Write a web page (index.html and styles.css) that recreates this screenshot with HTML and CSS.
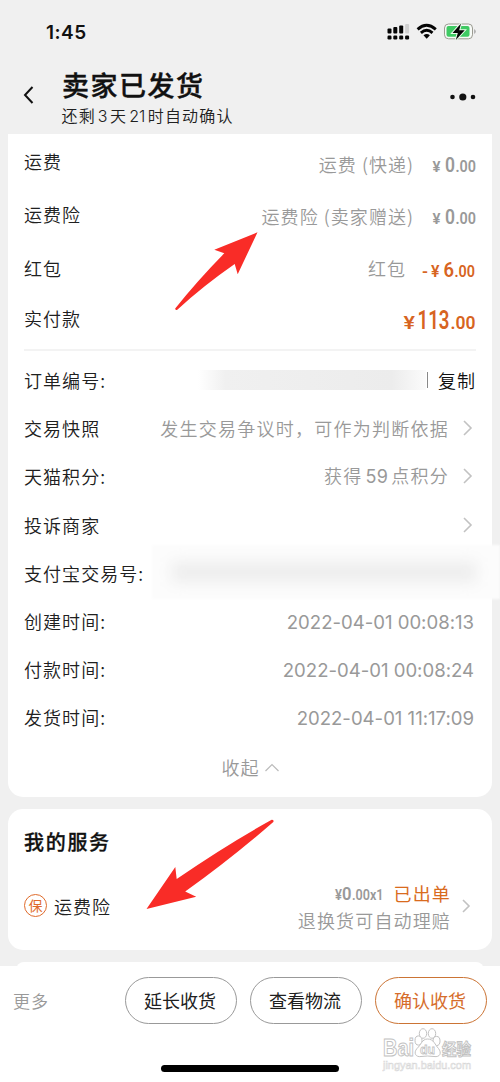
FILE: index.html
```html
<!DOCTYPE html>
<html lang="zh-CN">
<head>
<meta charset="utf-8">
<title>订单详情</title>
<link rel="stylesheet" href="styles.css">
</head>
<body>
<div class="screen">
  <div class="status">
    <span class="clock">1:45</span>
    <svg class="status-icons" width="92" height="20" viewBox="0 0 92 20">
      <g fill="#050505">
        <rect x="1.5" y="7.5" width="4" height="5" rx="1"/><rect x="7.3" y="6" width="4" height="6.500" rx="1"/><rect x="13.2" y="4.500" width="4" height="8" rx="1"/>
        <rect x="1.500" y="14.500" width="4" height="4" rx="1.200"/><rect x="7.300" y="14.500" width="4" height="4" rx="1.200"/><rect x="13.200" y="14.500" width="4" height="4" rx="1.200"/><rect x="19.100" y="14.500" width="4" height="4" rx="1.200"/>
      </g>
      <rect x="19.100" y="3" width="4" height="9.500" rx="1" fill="#d0d0d0"/>
      <path d="M31.600 8.300Q40.500 0.300 49.800 8.300M34.900 11.900Q40.700 6.800 46.500 11.900" fill="none" stroke="#050505" stroke-width="2.900"/>
      <path d="M37.500 14.300Q40.700 11.700 43.900 14.300L40.700 17.800Z" fill="#050505"/>
      <rect x="58.500" y="3" width="28" height="14.800" rx="4" fill="#f7faf7" stroke="#9b9b91"/>
      <rect x="60.500" y="5" width="23" height="10.800" rx="2" fill="#3fca63"/>
      <path d="M88.500 8v5q2-2.500 0-5" fill="#777"/>
      <path d="M75 2.500 66.500 12h5.300l-2 6.900 8.900-9.700h-5.500z" fill="#050505" stroke="#eafbea" stroke-width="2" paint-order="stroke"/>
    </svg>
  </div>
  <header class="head">
    <svg class="back" width="12" height="20" viewBox="0 0 12 20"><path d="M10.500 2 3 10l7.500 8" fill="none" stroke="#111" stroke-width="2"/></svg>
    <div class="titles"><h1>卖家已发货</h1><p>还剩<span class="num">3</span>天<span class="num">21</span>时自动确认</p></div>
    <svg class="dots" width="28" height="10" viewBox="0 0 28 10"><circle cx="3.500" cy="5" r="2.300"/><circle cx="13.800" cy="5" r="3.600"/><circle cx="24" cy="5" r="2.300"/></svg>
  </header>

  <main>
    <section class="card order">
      <div class="fees">
        <div class="row"><span>运费</span><span class="fee">运费 (快递)</span>
          <svg class="price grey" width="64" height="28" viewBox="0 0 64 28"><text x="16.500" y="22" font-size="15" textLength="8" lengthAdjust="spacingAndGlyphs">¥</text><text x="29" y="22" font-size="20" textLength="10" lengthAdjust="spacingAndGlyphs">0</text><text x="39.500" y="22" font-size="16" textLength="20.500" lengthAdjust="spacingAndGlyphs">.00</text></svg></div>
        <div class="row"><span>运费险</span><span class="fee">运费险 (卖家赠送)</span>
          <svg class="price grey" width="64" height="28" viewBox="0 0 64 28"><text x="16.500" y="22" font-size="15" textLength="8" lengthAdjust="spacingAndGlyphs">¥</text><text x="29" y="22" font-size="20" textLength="10" lengthAdjust="spacingAndGlyphs">0</text><text x="39.500" y="22" font-size="16" textLength="20.500" lengthAdjust="spacingAndGlyphs">.00</text></svg></div>
        <div class="row"><span>红包</span><span class="fee coupon">红包</span>
          <svg class="price orange" width="64" height="28" viewBox="0 0 64 28"><text x="6" y="22.500" font-size="16" textLength="6" lengthAdjust="spacingAndGlyphs">-</text><text x="15" y="23" font-size="16" textLength="8.500" lengthAdjust="spacingAndGlyphs">¥</text><text x="27.500" y="23" font-size="20" textLength="10.500" lengthAdjust="spacingAndGlyphs">6</text><text x="38.500" y="23" font-size="16" textLength="20.500" lengthAdjust="spacingAndGlyphs">.00</text></svg></div>
        <div class="row"><span>实付款</span>
          <svg class="price total orange" width="84" height="32" viewBox="0 0 84 32"><text x="7.500" y="26.500" font-size="19" textLength="11.500" lengthAdjust="spacingAndGlyphs">¥</text><text x="21.500" y="26.500" font-size="26" textLength="32" lengthAdjust="spacingAndGlyphs">113</text><text x="54.500" y="26.500" font-size="19" textLength="25" lengthAdjust="spacingAndGlyphs">.00</text></svg></div>
      </div>
      <div class="details">
        <div class="row"><span>订单编号:</span><i class="mask"></i><i class="bar"></i><span class="copy">复制</span></div>
        <div class="row"><span>交易快照</span><span class="value">发生交易争议时，可作为判断依据</span><svg class="arrow" width="10" height="16" viewBox="0 0 10 16"><path d="m1 1 7 7-7 7"/></svg></div>
        <div class="row"><span>天猫积分:</span><span class="value">获得<span class="pts">59</span>点积分</span><svg class="arrow" width="10" height="16" viewBox="0 0 10 16"><path d="m1 1 7 7-7 7"/></svg></div>
        <div class="row"><span>投诉商家</span><svg class="arrow" width="10" height="16" viewBox="0 0 10 16"><path d="m1 1 7 7-7 7"/></svg></div>
        <div class="row"><span>支付宝交易号:</span></div>
        <div class="row"><span>创建时间:</span><time>2022-04-01 00:08:13</time></div>
        <div class="row"><span>付款时间:</span><time>2022-04-01 00:08:24</time></div>
        <div class="row"><span>发货时间:</span><time>2022-04-01 11:17:09</time></div>
      </div>
      <div class="fold">收起<svg width="14" height="9" viewBox="0 0 14 9"><path d="m.500 8 6.500-6.500L13.500 8" fill="none" stroke="#bbb" stroke-width="1.200"/></svg></div>
      <div class="veil"><i></i></div>
    </section>

    <section class="card service">
      <h2>我的服务</h2>
      <div class="policy">
        <span class="seal">保</span><span class="policy-name">运费险</span>
        <div class="policy-info">
          <div class="issued"><svg class="price grey" width="54" height="24" viewBox="0 0 54 24"><text x="2" y="20" font-size="14" textLength="7" lengthAdjust="spacingAndGlyphs">¥</text><text x="9" y="20" font-size="18.500" textLength="9.500" lengthAdjust="spacingAndGlyphs">0</text><text x="19" y="20" font-size="15" textLength="31.500" lengthAdjust="spacingAndGlyphs">.00x1</text></svg><b>已出单</b></div>
          <p>退换货可自动理赔</p>
        </div>
        <svg class="arrow small" width="9" height="14" viewBox="0 0 9 14"><path d="m1 1 6 6-6 6"/></svg>
      </div>
    </section>
    <div class="next"></div>
  </main>

  <footer class="footer">
    <div class="actions"><span class="more">更多</span><button>延长收货</button><button>查看物流</button><button class="confirm">确认收货</button></div>
    <div class="home"></div>
  </footer>

  <svg class="pointers" width="500" height="1082" viewBox="0 0 500 1082">
    <path d="M257.500 232.300 214.300 249.700 224.300 253.300Q198 280 175.200 308.500Q175 310.500 177.300 309.700Q203 286 234.700 264L237.700 274.200Z"/>
    <path d="M146.500 908.900 175.300 867 176.700 879Q226 845 271.700 819.800Q274.300 819.800 273.300 822Q232 858 185.200 891.600L196.200 896.800Z"/>
  </svg>
  <svg class="watermark" width="96" height="50" viewBox="0 0 96 50">
    <g fill="#fff" stroke="#c2c2c2" stroke-width="1">
      <text x="1" y="28" font-size="23" font-weight="700" textLength="31" lengthAdjust="spacingAndGlyphs">Bai</text>
      <ellipse cx="36.500" cy="12.500" rx="3.500" ry="4.600"/><ellipse cx="41" cy="5.500" rx="3.700" ry="4.800"/><ellipse cx="50" cy="5.500" rx="3.700" ry="4.800"/><ellipse cx="54.500" cy="13" rx="3.500" ry="4.600"/>
      <path d="M45.500 11C40 11 39 17 35 20.500C31 25 34 29.500 39 28.500Q45.500 27.500 52 28.500C58 29.500 60 25 56.500 20.500C53 17 52 11 45.500 11Z"/>
      <text x="38" y="26" font-size="13" font-weight="700" stroke-width=".8" textLength="15" lengthAdjust="spacingAndGlyphs">du</text>
      <text class="cn" x="60" y="27" font-size="16" font-weight="700" textLength="29" lengthAdjust="spacingAndGlyphs">经验</text>
      <text x="1" y="41" font-size="11" stroke-width=".6" stroke="#d8d8d8" textLength="88" lengthAdjust="spacingAndGlyphs">jingyan.baidu.com</text>
    </g>
  </svg>
</div>
</body>
</html>
```
FILE: styles.css
```css
* { box-sizing: border-box; }
body { margin: 0; background: #fff; color: #202020; font-family: "Noto Sans CJK SC", sans-serif; font-weight: 350; }
h1, h2, p { margin: 0; }
.screen { position: relative; width: 500px; height: 1082px; overflow: hidden; background: #f0f0f0; display: flex; flex-direction: column; }
.status { height: 64px; display: flex; justify-content: space-between; padding: 21px 22px 0 46px; }
.clock { font: 600 19px/22px Inter, sans-serif; color: #111; letter-spacing: .5px; padding-top: 1px; }
.status-icons { display: block; }
.head { height: 70px; display: flex; align-items: flex-start; padding-left: 22px; }
.back { margin: 21px 28px 0 0; }
.titles { flex: 1; }
h1 { font-size: 27px; line-height: 34px; font-weight: 500; -webkit-text-stroke: .4px #111; letter-spacing: 1.5px; margin-top: 4px; color: #111; }
.titles p { font-size: 16px; line-height: 24px; letter-spacing: 1.15px; margin: 1px 0 0 -.5px; }
.num { font-family: Inter, sans-serif; margin: 0 2.5px 0 2px; letter-spacing: 0; }
.dots { margin: 28px 23px 0 0; fill: #111; }
main { height: 832px; display: flex; flex-direction: column; gap: 12px; padding: 0 8px; }
.card { background: #fff; border-radius: 15px; flex: none; }
.order { position: relative; height: 663px; padding: 1px 16px 0; border-radius: 0 0 15px 15px; }
.row { display: flex; align-items: center; font-size: 18px; letter-spacing: 1.05px; line-height: 26px; white-space: nowrap; }
.row > :first-child { margin-right: auto; }
.fees { display: grid; grid-template-rows: 52px 53px 55px 46px; height: 216px; border-bottom: 2px solid #f3f3f3; }
.fee, .value { color: #999; }
.fee { margin: 5px 2px 0 0; }
.coupon { margin: 0 10px 0 0; }
.price { display: block; flex: none; font-family: Roboto, sans-serif; font-weight: 600; letter-spacing: 0; overflow: visible; margin-right: -4px; }
.row .price.grey { margin-top: 5px; }
.grey { fill: #999; }
.orange { fill: #d76422; }
.details { margin-top: 5px; display: grid; grid-template-rows: repeat(8, 48.2px); }
.mask { width: 228px; height: 20px; background: linear-gradient(90deg, #fff, #f0f0f0 12%, #ececec 85%, #fbfbfb); }
.bar { width: 1px; height: 16px; background: #888; margin: 0 10px 0 1px; }
.copy { color: #111; }
.arrow { fill: none; stroke: #c2c2c2; stroke-width: 1.6; margin: 0 3px 0 14px; flex: none; }
.value { letter-spacing: 1.25px; }
.pts, time { font-family: Inter, sans-serif; font-weight: 400; color: #999; }
.pts { margin: 0 3px; letter-spacing: .3px; }
time { letter-spacing: -.02px; font-size: 18.6px; margin: 1px 2px 0 0; }
.fold { display: flex; align-items: center; justify-content: center; height: 51px; gap: 5px; font-size: 18px; letter-spacing: 1px; color: #999; }
.veil { position: absolute; left: 144px; top: 411px; width: 348px; height: 54px; background: #fcfcfc; padding: 17px 20px; filter: blur(1px); }
.veil i { display: block; width: 304px; height: 20px; background: #ededed; filter: blur(7px); }
.service { height: 141px; padding: 16px; }
h2 { font-size: 20px; line-height: 34px; font-weight: 500; -webkit-text-stroke: .3px #111; letter-spacing: 1.7px; color: #111; }
.policy { display: flex; align-items: center; height: 62px; margin-top: 15.5px; }
.seal { width: 23px; height: 23px; border: 1.5px solid #df6b2b; border-radius: 50%; color: #df6b2b; font-size: 14px; font-weight: 400; line-height: 20px; text-align: center; }
.policy-name { font-size: 18px; letter-spacing: 1px; margin-left: 7px; }
.policy-info { margin: 2px 0 0 auto; text-align: right; color: #999; font-size: 18px; line-height: 27px; letter-spacing: 1.15px; }
.issued { display: flex; justify-content: flex-end; align-items: center; }
.issued b { color: #d96b1e; font-weight: 400; margin-left: 11px; }
.issued .price { margin-top: -2px; }
.arrow.small { margin: 0 5px 0 11px; }
.next { height: 10px; margin: 0 8px; background: #fff; border-radius: 8px 8px 0 0; flex: none; }
.footer { height: 116px; background: #fff; }
.actions { display: flex; align-items: center; padding: 11px 13px 0 13px; height: 58px; gap: 13px; }
.more { margin-right: auto; color: #999; font-size: 17px; letter-spacing: 1px; }
button { width: 112px; height: 47px; border: 1px solid #999; border-radius: 24px; background: #fff; color: #202020; font: 400 18px/26px "Noto Sans CJK SC", sans-serif; padding: 0 2px 2px 0; white-space: nowrap; }
.confirm { border-color: #cb7435; color: #d66d2b; }
.home { width: 178px; height: 7px; border-radius: 4px; background: #000; margin: 41px auto 0; }
.pointers { position: absolute; left: 0; top: 0; fill: #f92c27; pointer-events: none; }
.watermark { position: absolute; left: 382px; top: 1028px; font-family: "Liberation Sans", sans-serif; }
.cn { font-family: "Noto Sans CJK SC", sans-serif; }
```
